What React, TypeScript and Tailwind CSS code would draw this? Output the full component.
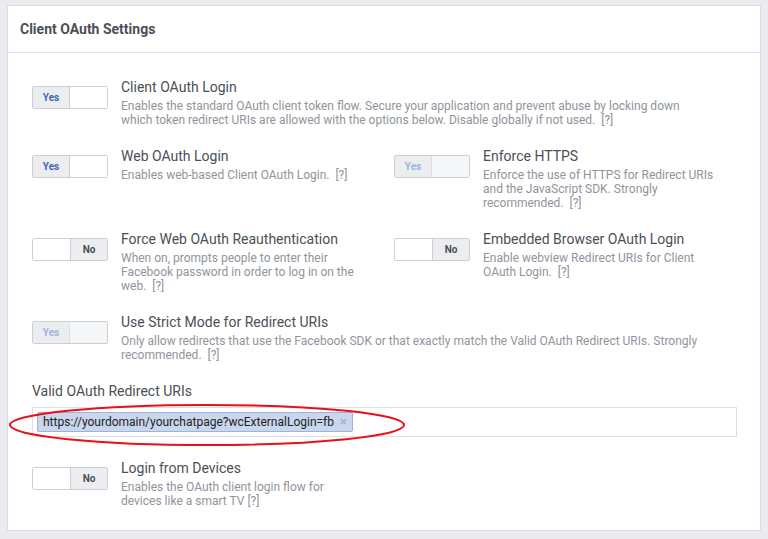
import React from 'react';

type ToggleProps = { on: boolean; disabled?: boolean };

function Toggle({ on, disabled = false }: ToggleProps) {
  return (
    <div className="mt-[8px] flex h-[23px] w-[76px] shrink-0 overflow-hidden rounded-[2px] border border-[#ccd0d5]">
      {on ? (
        <>
          <div
            className={
              disabled
                ? 'flex w-[37px] items-center justify-center border-r border-[#dddfe2] bg-[#ebedf0] text-[10px] font-bold text-[#9cb4d8]'
                : 'flex w-[37px] items-center justify-center border-r border-[#ccd0d5] bg-[#ebedf0] text-[10px] font-bold text-[#4267b2]'
            }
          >
            Yes
          </div>
          <div className={disabled ? 'flex-1 bg-[#f5f6f7]' : 'flex-1 bg-white'} />
        </>
      ) : (
        <>
          <div className="flex-1 bg-white" />
          <div className="flex w-[37px] items-center justify-center border-l border-[#ccd0d5] bg-[#ebedf0] text-[10px] font-bold text-[#4b4f56]">
            No
          </div>
        </>
      )}
    </div>
  );
}

type SettingProps = {
  title: string;
  desc: string;
  on: boolean;
  disabled?: boolean;
  descWidth?: string;
  tight?: boolean;
};

function Setting({ title, desc, on, disabled, descWidth = 'w-[240px]', tight = false }: SettingProps) {
  const text = tight ? `${desc} [?]` : `${desc}\u00a0\u00a0[?]`;
  return (
    <div className="flex gap-[13px]">
      <Toggle on={on} disabled={disabled} />
      <div className="min-w-0">
        <p className="text-[14px] leading-[18px] text-[#4b4f56]">{title}</p>
        <p className={`mt-[3px] text-[12px] leading-[14px] text-[#90949c] ${descWidth}`}>{text}</p>
      </div>
    </div>
  );
}

export default function App() {
  return (
    <div
      className="min-h-[539px] bg-[#e9ebee] px-[7px] pt-[5px]"
      style={{ fontFamily: 'Roboto, "Liberation Sans", Arial, sans-serif' }}
    >
      <div className="h-[526px] border border-[#dddfe2] bg-white">
        <div className="flex h-[47px] items-center border-b border-[#e5e5e5] px-[12px]">
          <h2 className="text-[14px] font-bold text-[#4b4f56]">Client OAuth Settings</h2>
        </div>

        <div className="flex flex-col px-[24px] pt-[25px]">
          <Setting
            on
            title="Client OAuth Login"
            desc="Enables the standard OAuth client token flow. Secure your application and prevent abuse by locking down which token redirect URIs are allowed with the options below. Disable globally if not used."
            descWidth="w-[580px]"
          />

          <div className="mt-[20px] grid grid-cols-[362px_1fr]">
            <Setting on title="Web OAuth Login" desc="Enables web-based Client OAuth Login." />
            <Setting
              on
              disabled
              title="Enforce HTTPS"
              desc="Enforce the use of HTTPS for Redirect URIs and the JavaScript SDK. Strongly recommended."
            />
          </div>

          <div className="mt-[20px] grid grid-cols-[362px_1fr]">
            <Setting
              on={false}
              title="Force Web OAuth Reauthentication"
              desc="When on, prompts people to enter their Facebook password in order to log in on the web."
            />
            <Setting
              on={false}
              title="Embedded Browser OAuth Login"
              desc="Enable webview Redirect URIs for Client OAuth Login."
            />
          </div>

          <div className="mt-[20px]">
            <Setting
              on
              disabled
              title="Use Strict Mode for Redirect URIs"
              desc="Only allow redirects that use the Facebook SDK or that exactly match the Valid OAuth Redirect URIs. Strongly recommended."
              descWidth="w-[590px]"
            />
          </div>

          <p className="mt-[20px] text-[14px] leading-[18px] text-[#4b4f56]">Valid OAuth Redirect URIs</p>
          <div className="relative mt-[7px] flex h-[30px] w-[705px] items-center border border-[#dddfe2] px-[4px]">
            <div className="flex h-[20px] items-center gap-[6px] rounded-[2px] border border-[#9cb4d8] bg-[#c9d6ec] px-[5px] text-[12px] text-[#1d2129]">
              <span>https://yourdomain/yourchatpage?wcExternalLogin=fb</span>
              <span className="text-[13px] font-bold text-[#a5b3c9]">×</span>
            </div>
            <svg
              className="pointer-events-none absolute left-[-25px] top-[-4px]"
              width="400"
              height="44"
              viewBox="0 0 400 44"
            >
              <ellipse cx="199" cy="21" rx="197" ry="20" fill="none" stroke="#e8101a" strokeWidth="2" />
            </svg>
          </div>

          <div className="mt-[22px]">
            <Setting
              on={false}
              tight
              title="Login from Devices"
              desc="Enables the OAuth client login flow for devices like a smart TV"
              descWidth="w-[215px]"
            />
          </div>
        </div>
      </div>
    </div>
  );
}
